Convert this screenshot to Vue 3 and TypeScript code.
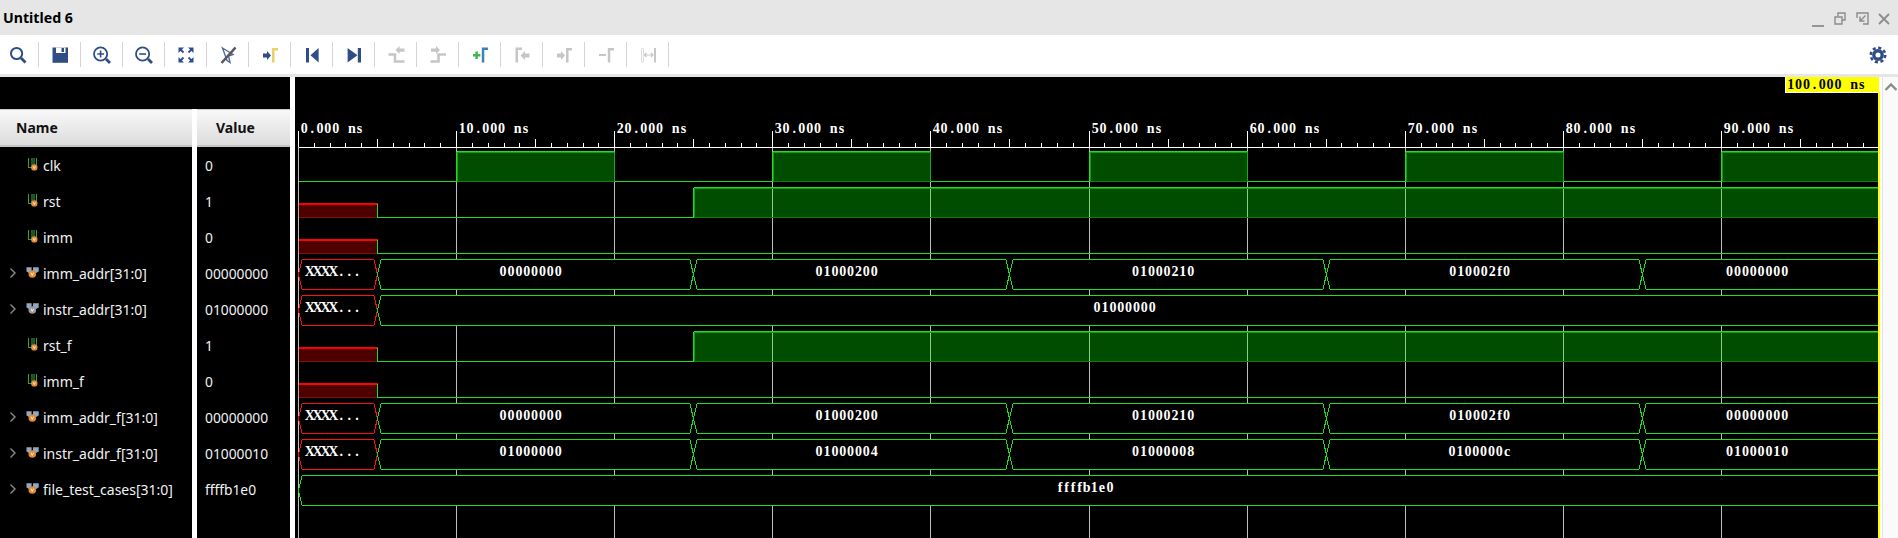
<script setup lang="ts">
import { computed } from 'vue';

type Level = 'x' | 0 | 1;
type BitSeg = [number, number, Level];
type BusSeg = [number, number, string, boolean?];

interface Signal {
  name: string;
  value: string;
  dim?: boolean;
  bits?: BitSeg[];
  bus?: BusSeg[];
}

const BLUE = '#2f4e87';
const GRAY = '#c6c6c6';
const LIGHT = '#dedede';
const AMBER = '#e9d06f';
const STEEL = '#3f82b6';
const PLUS = '#41b84e';

interface Shape { d: string; fill?: string; stroke?: string; w?: number }

const tools: Shape[][] = [
  [{ d: 'M5 10.5a5.6 5.6 0 1 0 11.2 0a5.6 5.6 0 1 0 -11.2 0', stroke: BLUE, w: 2 }, { d: 'M15 15L19.5 19.5', stroke: BLUE, w: 2.8 }],
  [{ d: 'M4.5 4.5H20V19.8H4.5Z', fill: BLUE }, { d: 'M8 4.5H17.5V10H8Z', fill: '#fff' }, { d: 'M13.5 5H16V9H13.5Z', fill: BLUE }],
  [{ d: 'M4 11a6.6 6.6 0 1 0 13.2 0a6.6 6.6 0 1 0 -13.2 0', stroke: BLUE, w: 1.8 }, { d: 'M7.2 11H14M10.6 7.6V14.4', stroke: BLUE, w: 1.6 }, { d: 'M16 16L20 20', stroke: BLUE, w: 2.8 }],
  [{ d: 'M4 11a6.6 6.6 0 1 0 13.2 0a6.6 6.6 0 1 0 -13.2 0', stroke: BLUE, w: 1.8 }, { d: 'M7.2 11H14', stroke: BLUE, w: 1.6 }, { d: 'M16 16L20 20', stroke: BLUE, w: 2.8 }],
  [
    { d: 'M4.5 4.5H10L4.5 10Z M19.5 4.5H14L19.5 10Z M4.5 19.5H10L4.5 14Z M19.5 19.5H14L19.5 14Z', fill: BLUE },
    { d: 'M6 6L9.5 9.5M18 6L14.5 9.5M6 18L9.5 14.5M18 18L14.5 14.5', stroke: BLUE, w: 1.8 },
  ],
  [
    { d: 'M6.5 5L17 11.5L12.5 13L14 19.5L11 17.5Z', stroke: '#4f6a99', w: 1.4 },
    { d: 'M19.5 4.5L5.5 20', stroke: '#585858', w: 2.6 },
  ],
  [{ d: 'M5 10.5H9V8L13 12.5L9 17V14.5H5Z', fill: BLUE }, { d: 'M14 5H20V7.5H16.5V19.5H14Z', fill: AMBER }],
  [{ d: 'M6 5H9V19.5H6Z', fill: BLUE }, { d: 'M18.6 5V19.5L10.5 12.2Z', fill: BLUE }],
  [{ d: 'M5.6 5V19.5L15.5 12.2Z', fill: BLUE }, { d: 'M15.8 5H19V19.5H15.8Z', fill: BLUE }],
  [
    { d: 'M4.5 11.5H11V18.5H20.5', stroke: GRAY, w: 2.6 },
    { d: 'M20.5 5.5H15.5V3L11.5 7L15.5 11V8.8H20.5Z', fill: GRAY },
  ],
  [
    { d: 'M4.5 18.5H12.5V11.5H20', stroke: GRAY, w: 2.6 },
    { d: 'M5 5.5H10V3L14 7L10 11V8.8H5Z', fill: GRAY },
  ],
  [
    { d: 'M7.4 8.6H9.9V11.1H12.4V13.6H9.9V16.1H7.4V13.6H5V11.1H7.4Z', fill: PLUS },
    { d: 'M13.8 4.5H20V7H16.3V19.5H13.8Z', fill: STEEL },
  ],
  [{ d: 'M5.5 4.5H12V7H8V19.5H5.5Z', fill: GRAY }, { d: 'M19.5 10.5H15V8L10.5 12.5L15 17V14.5H19.5Z', fill: GRAY }],
  [{ d: 'M5 10.5H9V8L13 12.5L9 17V14.5H5Z', fill: GRAY }, { d: 'M14 5H20V7.5H16.5V19.5H14Z', fill: GRAY }],
  [{ d: 'M5 11H12V13H5Z', fill: GRAY }, { d: 'M13.8 5H20V7.5H16.3V19.5H13.8Z', fill: GRAY }],
  [
    { d: 'M5.5 5.5H7.5V19H5.5Z', stroke: LIGHT, w: 1 },
    { d: 'M18 5H20V19.5H18Z', fill: GRAY },
    { d: 'M8.5 12H17M10.5 10L8.5 12L10.5 14M15 10L17 12L15 14', stroke: GRAY, w: 1.2 },
  ],
];

const rstBits: BitSeg[] = [[0, 5, 'x'], [5, 25, 0], [25, 100, 1]];
const immBits: BitSeg[] = [[0, 5, 'x'], [5, 100, 0]];
const immBus: BusSeg[] = [
  [0, 5, 'XXXX...', true], [5, 25, '00000000'], [25, 45, '01000200'],
  [45, 65, '01000210'], [65, 85, '010002f0'], [85, 100.1, '00000000'],
];

const signals: Signal[] = [
  {
    name: 'clk', value: '0',
    bits: [[0, 10, 0], [10, 20, 1], [20, 30, 0], [30, 40, 1], [40, 50, 0], [50, 60, 1], [60, 70, 0], [70, 80, 1], [80, 90, 0], [90, 100, 1]],
  },
  { name: 'rst', value: '1', bits: rstBits },
  { name: 'imm', value: '0', bits: immBits },
  { name: 'imm_addr[31:0]', value: '00000000', bus: immBus },
  { name: 'instr_addr[31:0]', value: '01000000', dim: true, bus: [[0, 5, 'XXXX...', true], [5, 100.1, '01000000']] },
  { name: 'rst_f', value: '1', bits: rstBits },
  { name: 'imm_f', value: '0', bits: immBits },
  { name: 'imm_addr_f[31:0]', value: '00000000', bus: immBus },
  {
    name: 'instr_addr_f[31:0]', value: '01000010',
    bus: [[0, 5, 'XXXX...', true], [5, 25, '01000000'], [25, 45, '01000004'], [45, 65, '01000008'], [65, 85, '0100000c'], [85, 100.1, '01000010']],
  },
  { name: 'file_test_cases[31:0]', value: 'ffffb1e0', bus: [[0, 100.1, 'ffffb1e0']] },
];

const px = (ns: number) => Math.round(298 + 15.81 * ns) + 0.5;
const lowY = (i: number) => 181.5 + 36 * i;

const CELL = 7.87;
const advance = (ch: string) => (ch === 'f' ? 6.5 : CELL);
const nudge: Record<string, number> = { '.': 2.2, ' ': 0, s: 1.2, f: 1, e: 0.4, c: 0.4, b: 0, X: -1.2 };
const cells = (text: string, start: number) => {
  let at = start;
  return [...text].map((ch) => {
    const x = (at + (nudge[ch] ?? 0.2)).toFixed(1);
    at += advance(ch);
    return x;
  }).join(' ');
};
const textWidth = (text: string) => [...text].reduce((sum, ch) => sum + advance(ch), 0);

const scale = computed(() => {
  const ticks: { x: number; top: number }[] = [];
  for (let ns = 0; ns < 100; ns++) {
    ticks.push({ x: px(ns), top: ns % 10 === 0 ? 131 : ns % 5 === 0 ? 139 : 143 });
  }
  return ticks;
});

const stamps = [0, 10, 20, 30, 40, 50, 60, 70, 80, 90];

const parts = computed(() => {
  const blocks: { x: number; y: number; w: number; h: number; fill: string }[] = [];
  const lines: { d: string; color: string; w: number }[] = [];
  const hexes: { d: string; color: string }[] = [];
  const labels: { xs: string; y: number; text: string }[] = [];

  signals.forEach((sig, i) => {
    const low = lowY(i);
    const high = low - 30;
    sig.bits?.forEach(([from, to, level]) => {
      const a = px(from);
      const b = px(to);
      if (level === 0) {
        lines.push({ d: `M${a} ${low}H${b}`, color: '#1fe01f', w: 1 });
      } else if (level === 1) {
        blocks.push({ x: a, y: high, w: b - a, h: 30, fill: 'rgba(0,255,0,.3)' });
        lines.push({ d: `M${a} ${low}H${b}`, color: '#107c10', w: 1 });
        lines.push({ d: `M${a} ${high + 1}H${b}`, color: '#139c13', w: 1 });
        lines.push({ d: `M${a} ${high}H${b}`, color: '#1fe01f', w: 1 });
        lines.push({ d: `M${a + 1} ${low}V${high}`, color: '#139c13', w: 1 });
        lines.push({ d: `M${a} ${low}V${high}`, color: '#1fe01f', w: 1 });
        if (to < 100) lines.push({ d: `M${b} ${high}V${low}`, color: '#1ba81b', w: 1 });
      } else {
        blocks.push({ x: a, y: low - 14, w: b - a, h: 14, fill: 'rgba(255,0,0,.3)' });
        lines.push({ d: `M${a} ${low}H${b}`, color: '#7d1010', w: 1 });
        lines.push({ d: `M${a} ${low - 14}H${b}`, color: '#ff0000', w: 2 });
        lines.push({ d: `M${b} ${low - 14}V${low}`, color: '#1fe01f', w: 1 });
      }
    });
    sig.bus?.forEach(([from, to, text, bad]) => {
      const a = px(from);
      const b = px(to);
      const mid = low - 15;
      hexes.push({
        d: `M${a} ${mid}L${a + 3.7} ${high}H${b - 3.7}L${b} ${mid}L${b - 3.7} ${low}H${a + 3.7}Z`,
        color: bad ? '#ff1010' : '#1fe01f',
      });
      const start = (a + b) / 2 - 4.6 - textWidth(text) / 2;
      labels.push({ xs: cells(text, start), y: low - 13.5, text });
    });
  });
  return { blocks, lines, hexes, labels };
});
</script>

<template>
  <div class="window">
    <header class="titlebar">
      <span class="title">Untitled 6</span>
      <div class="win-controls">
        <svg width="22" height="22" viewBox="0 0 22 22"><path d="M5 17H17" class="win-line" /></svg>
        <svg width="22" height="22" viewBox="0 0 22 22"><path d="M9 7V4H16V11H13M6 8H13V15H6Z" class="win-thin" /></svg>
        <svg width="22" height="22" viewBox="0 0 22 22"><path d="M6 9V4H17V15H12M14.5 6.5L9 12M9 7.5V12H13.5" class="win-thin" /></svg>
        <svg width="22" height="22" viewBox="0 0 22 22"><path d="M6 5L16 15M16 5L6 15" class="win-line" /></svg>
      </div>
    </header>

    <nav class="toolbar">
      <div v-for="(shapes, i) in tools" :key="i" class="tool">
        <svg width="24" height="24" viewBox="0 0 24 24">
          <path
            v-for="(s, j) in shapes"
            :key="j"
            :d="s.d"
            :fill="s.fill ?? 'none'"
            :stroke="s.stroke ?? 'none'"
            :stroke-width="s.w ?? 0"
          />
        </svg>
      </div>
      <svg class="gear" width="20" height="20" viewBox="0 0 20 20">
        <circle cx="10" cy="10" r="7.2" fill="none" stroke="#2f4e87" stroke-width="2.6" stroke-dasharray="3.1 2.55" />
        <circle cx="10" cy="10" r="4.2" fill="none" stroke="#2f4e87" stroke-width="3.4" />
      </svg>
    </nav>

    <main class="viewer">
      <section class="signals">
        <div class="signals-top"></div>
        <div class="signals-cols">
          <div class="col col-name">
            <div class="col-head">Name</div>
            <div v-for="sig in signals" :key="sig.name" class="row">
              <svg v-if="sig.bus" class="caret" width="8" height="12" viewBox="0 0 8 12">
                <path d="M1.5 1.5L6 6L1.5 10.5" />
              </svg>
              <svg class="sig-icon" width="15" height="16" viewBox="0 0 15 16">
                <template v-if="sig.bus">
                  <path d="M0.5 2.3H5.6V5.8L3 8L0.5 6.6Z M7 2.3H12.7V6.6L10 8L7 5.8Z" fill="#8fa9c4" />
                  <circle cx="6.3" cy="9" r="3.8" :fill="sig.dim ? '#9a9a9a' : '#e8892d'" />
                  <path d="M5 7.6L6.3 10.4L7.6 7.6" fill="none" stroke="#fff" stroke-width="0.9" />
                </template>
                <template v-else>
                  <path d="M2.5 1V10.5H6V1M8 1V8M10.5 1V8" fill="none" stroke="#3c9a46" stroke-width="1.1" />
                  <circle cx="8.3" cy="10.4" r="3.2" fill="#e8892d" />
                  <path d="M7.2 9.2L8.3 11.6L9.4 9.2" fill="none" stroke="#fff" stroke-width="0.8" />
                </template>
              </svg>
              <span class="sig-name">{{ sig.name }}</span>
            </div>
          </div>
          <div class="col col-value">
            <div class="col-head">Value</div>
            <div v-for="sig in signals" :key="sig.name" class="row value">{{ sig.value }}</div>
          </div>
        </div>
      </section>

      <svg class="wave" width="1585" height="461" viewBox="295 77 1585 461">
        <defs>
          <clipPath id="wave-clip"><rect x="295" y="77" width="1583" height="461" /></clipPath>
        </defs>
        <rect x="295" y="77" width="1585" height="461" fill="#000" />

        <path v-for="t in stamps" :key="t" :d="`M${px(t)} 147V538`" class="grid" />

        <g clip-path="url(#wave-clip)">
          <rect
            v-for="(b, i) in parts.blocks"
            :key="'b' + i"
            :x="b.x" :y="b.y" :width="b.w" :height="b.h" :fill="b.fill"
          />
          <path
            v-for="(h, i) in parts.hexes"
            :key="'h' + i"
            :d="h.d" :stroke="h.color" class="hex"
          />
          <path
            v-for="(l, i) in parts.lines"
            :key="'l' + i"
            :d="l.d" :stroke="l.color" :stroke-width="l.w" class="seg"
          />
        </g>

        <text
          v-for="(l, i) in parts.labels"
          :key="'t' + i"
          :x="l.xs" :y="l.y"
          class="label"
        >{{ l.text }}</text>

        <path :d="`M${px(0)} 147.5H1878`" class="tick" />
        <path v-for="(t, i) in scale" :key="i" :d="`M${t.x} ${t.top}V147`" class="tick" />
        <text
          v-for="t in stamps"
          :key="'s' + t"
          :x="cells(`${t}.000 ns`, px(t) + 2)"
          y="133"
          class="stamp"
        >{{ t }}.000 ns</text>

        <rect x="1785" y="77" width="95" height="16" fill="#fff" />
        <rect x="1786" y="77" width="93" height="15" fill="#ffff00" />
        <rect x="1878" y="92" width="2" height="446" fill="#ffff00" />
        <text :x="cells('100.000 ns', 1787)" y="89" class="flag">100.000 ns</text>
      </svg>

      <aside class="scrollbar">
        <svg width="16" height="12" viewBox="0 0 16 12"><path d="M2.5 9L8 3.5L13.5 9" /></svg>
      </aside>
    </main>
  </div>
</template>

<style scoped>
.window {
  display: flex;
  flex-direction: column;
  width: 1898px;
  height: 538px;
  overflow: hidden;
  background: #fff;
  font-family: 'Noto Sans', 'Open Sans', sans-serif;
}

.titlebar {
  display: flex;
  align-items: center;
  justify-content: space-between;
  height: 35px;
  padding-left: 3px;
  background: #e6e6e6;
}
.title {
  font-size: 14.2px;
  font-weight: 700;
  color: #000;
}
.win-controls {
  display: flex;
  align-items: center;
  padding-right: 3px;
  margin-top: 5px;
}
.win-line { fill: none; stroke: #8c8c8c; stroke-width: 1.8; }
.win-thin { fill: none; stroke: #8c8c8c; stroke-width: 1.4; }

.toolbar {
  display: flex;
  align-items: center;
  height: 39px;
  margin-left: -3px;
  background: #fff;
}
.tool {
  display: flex;
  align-items: center;
  justify-content: center;
  box-sizing: border-box;
  width: 42px;
  height: 25px;
  border-right: 1px solid #d4d4d4;
}
.gear { margin-left: auto; margin-right: 10px; }

.viewer {
  display: flex;
  flex: 1;
  min-height: 0;
  margin-top: 3px;
  box-shadow: 0 -3px 0 #e6e6e6;
}

.signals {
  display: flex;
  flex-direction: column;
  flex: 0 0 290px;
  margin-right: 5px;
}
.signals-top { height: 32px; background: #000; }
.signals-cols { display: flex; flex: 1; gap: 5px; }
.col { background: #000; color: #f2f2f2; }
.col-name { flex: 0 0 192px; }
.col-value { flex: 0 0 93px; }
.col-head {
  box-sizing: border-box;
  height: 38px;
  line-height: 36px;
  font-size: 14px;
  font-weight: 700;
  color: #111;
  background: linear-gradient(#f8f8f8, #dcdcdc);
  border-top: 1px solid #c9c9c9;
  border-bottom: 2px solid #c4c4c4;
}
.col-name .col-head { padding-left: 16px; }
.col-value .col-head { padding-left: 19px; }

.row {
  position: relative;
  display: flex;
  align-items: center;
  height: 36px;
  font-size: 14px;
}
.col-name .row { padding-left: 26px; }
.value { padding-left: 8px; font-size: 13.8px; }
.caret {
  position: absolute;
  left: 9px;
  top: 12px;
}
.caret path { fill: none; stroke: #8a8a8a; stroke-width: 1.4; }
.sig-icon { flex: none; margin-right: 2px; }
.sig-name { white-space: nowrap; }

.wave { flex: none; display: block; }
.grid { stroke: #bdbdbd; stroke-width: 1; shape-rendering: crispEdges; }
.hex { fill: #000; stroke-width: 1; shape-rendering: crispEdges; }
.seg { fill: none; shape-rendering: crispEdges; }
.tick { fill: none; stroke: #fff; stroke-width: 1; shape-rendering: crispEdges; }
.label, .stamp, .flag {
  font-family: 'Liberation Serif', serif;
  font-weight: 700;
  font-size: 14px;
}
.label, .stamp { fill: #fff; }
.flag { fill: #000; }

.scrollbar {
  box-sizing: border-box;
  flex: 0 0 16px;
  margin-left: 2px;
  padding-top: 4px;
  background: #fafafa;
  border-left: 1px solid #e4e4e4;
}
.scrollbar svg { display: block; }
.scrollbar path { fill: none; stroke: #8c8c8c; stroke-width: 2.4; }
</style>
